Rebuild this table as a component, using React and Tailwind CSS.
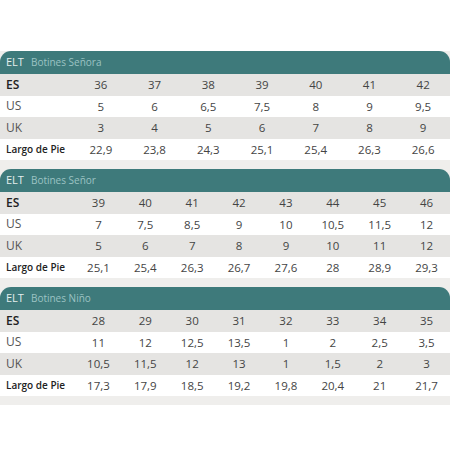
const tables = [
  {
    title: "Botines Señora",
    cols: "grid-cols-[74px_repeat(7,1fr)]",
    rows: [
      ["ES", "36", "37", "38", "39", "40", "41", "42"],
      ["US", "5", "6", "6,5", "7,5", "8", "9", "9,5"],
      ["UK", "3", "4", "5", "6", "7", "8", "9"],
      ["Largo de Pie", "22,9", "23,8", "24,3", "25,1", "25,4", "26,3", "26,6"],
    ],
  },
  {
    title: "Botines Señor",
    cols: "grid-cols-[75px_repeat(8,1fr)]",
    rows: [
      ["ES", "39", "40", "41", "42", "43", "44", "45", "46"],
      ["US", "7", "7,5", "8,5", "9", "10", "10,5", "11,5", "12"],
      ["UK", "5", "6", "7", "8", "9", "10", "11", "12"],
      ["Largo de Pie", "25,1", "25,4", "26,3", "26,7", "27,6", "28", "28,9", "29,3"],
    ],
  },
  {
    title: "Botines Niño",
    cols: "grid-cols-[75px_repeat(8,1fr)]",
    rows: [
      ["ES", "28", "29", "30", "31", "32", "33", "34", "35"],
      ["US", "11", "12", "12,5", "13,5", "1", "2", "2,5", "3,5"],
      ["UK", "10,5", "11,5", "12", "13", "1", "1,5", "2", "3"],
      ["Largo de Pie", "17,3", "17,9", "18,5", "19,2", "19,8", "20,4", "21", "21,7"],
    ],
  },
];

function SizeTable({ table }) {
  return (
    <div className="bg-[#efeeec] pb-[9px]">
      {/* header */}
      <div className="h-[23px] bg-[#3e7a7b] rounded-t-[11px] flex items-center px-[6px] gap-[7px]">
        <span className="text-[11px] text-[#e4eeee]">ELT</span>
        <span className="text-[10px] text-[#9cc3c3]">{table.title}</span>
      </div>
      {table.rows.map((row, i) => (
        <div
          key={i}
          className={`grid ${table.cols} h-[21.5px] items-center ${i % 2 === 0 ? "bg-[#e5e4e2]" : "bg-white"}`}
        >
          {row.map((cell, j) =>
            j === 0 ? (
              <span
                key={j}
                className={
                  i === 0
                    ? "pl-[6px] text-[12px] font-semibold text-[#222]"
                    : i === 3
                    ? "pl-[6px] text-[10px] font-semibold text-[#222]"
                    : "pl-[6px] text-[12px] text-[#555]"
                }
              >
                {cell}
              </span>
            ) : (
              <span key={j} className="text-center text-[11.5px] text-[#444]">
                {cell}
              </span>
            )
          )}
        </div>
      ))}
    </div>
  );
}

export default function App() {
  return (
    <div className="w-[450px] h-[450px] bg-white font-['Open_Sans',sans-serif] pt-[51px] overflow-hidden">
      {tables.map((t, i) => (
        <SizeTable key={i} table={t} />
      ))}
    </div>
  );
}
